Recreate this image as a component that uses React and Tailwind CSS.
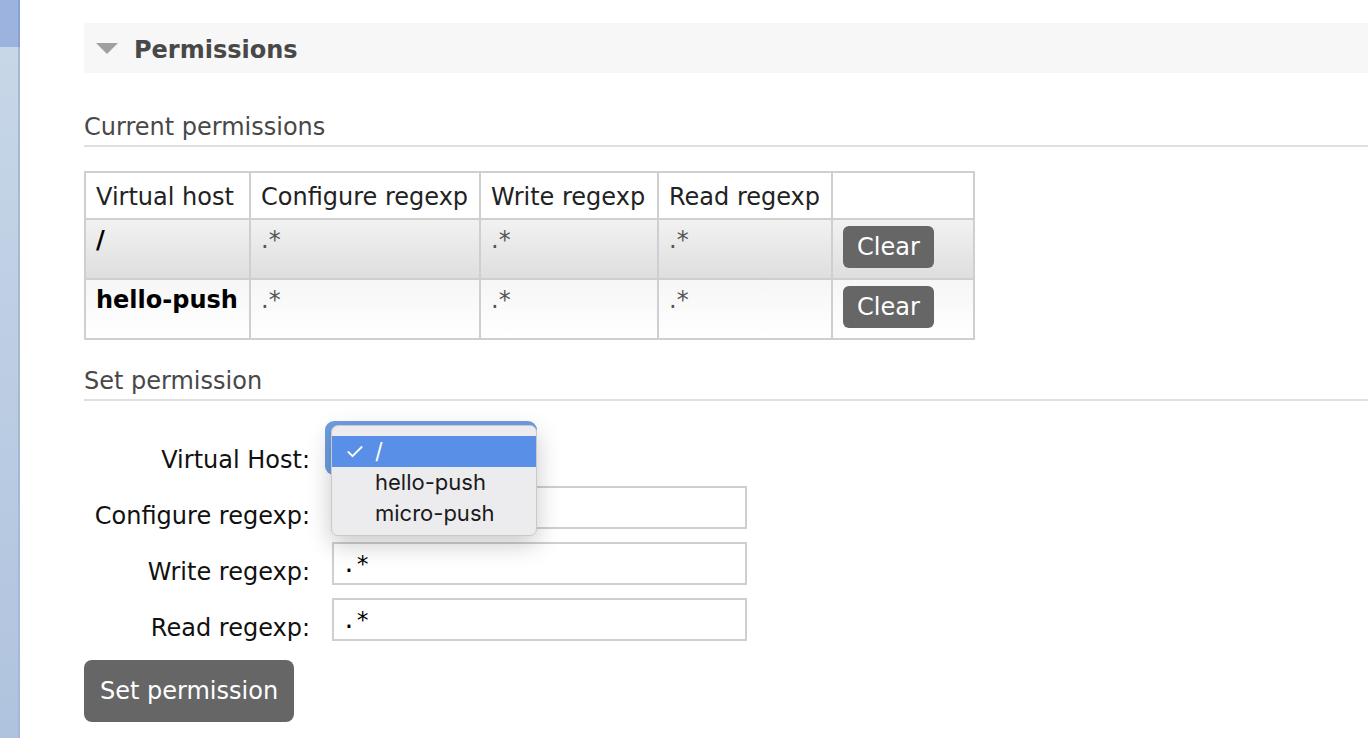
import { Check } from "lucide-react";

const rows = [
  { vhost: "/", configure: ".*", write: ".*", read: ".*", shade: "bg-gradient-to-b from-[#f2f2f2] to-[#dedede]" },
  { vhost: "hello-push", configure: ".*", write: ".*", read: ".*", shade: "bg-gradient-to-b from-[#f6f6f6] to-[#ffffff]" },
];

const fields = [
  { label: "Configure regexp:", value: ".*" },
  { label: "Write regexp:", value: ".*" },
  { label: "Read regexp:", value: ".*" },
];

function Sidebar() {
  return (
    <div className="flex w-[20px] shrink-0 flex-col">
      <div className="h-[47px] border-r-2 border-[#87a2d0] bg-[#9bb3de]" />
      <div className="flex-1 border-r-2 border-[#a6b9d4] bg-gradient-to-b from-[#c7d7e8] to-[#b0c3de]" />
    </div>
  );
}

function SubHeading({ children }) {
  return (
    <h3 className="border-b-2 border-[#e0e0e0] pb-[3px] text-[24px] leading-[29px] font-normal text-[#484848]">
      {children}
    </h3>
  );
}

function PermissionsTable() {
  const cell = "border-2 border-[#cfcfcf] px-[10px] align-top";
  const head = `${cell} pt-[10px] pb-[6px] text-left font-normal`;
  return (
    <table className="mt-[24px] table-fixed border-collapse text-[24px] leading-[29px]">
      <thead>
        <tr className="text-[#222]">
          <th className={`${head} w-[165px]`}>Virtual host</th>
          <th className={`${head} w-[230px]`}>Configure regexp</th>
          <th className={`${head} w-[178px]`}>Write regexp</th>
          <th className={`${head} w-[174px]`}>Read regexp</th>
          <th className={`${head} w-[142px]`}></th>
        </tr>
      </thead>
      <tbody>
        {rows.map((r) => (
          <tr key={r.vhost} className={`h-[60px] ${r.shade}`}>
            <td className={`${cell} pt-[6px] font-bold text-black`}>{r.vhost}</td>
            <td className={`${cell} pt-[6px] text-[#555]`}>{r.configure}</td>
            <td className={`${cell} pt-[6px] text-[#555]`}>{r.write}</td>
            <td className={`${cell} pt-[6px] text-[#555]`}>{r.read}</td>
            <td className={`${cell} pt-[6px]`}>
              <button className="h-[42px] rounded-[6px] bg-[#666] px-[14px] text-[24px] text-white">
                Clear
              </button>
            </td>
          </tr>
        ))}
      </tbody>
    </table>
  );
}

function VhostSelect() {
  return (
    <div className="relative h-[43px] w-[415px]">
      <div className="absolute left-[-7px] top-[-9px] h-[54px] w-[212px] rounded-[9px] bg-[#6d9ee3]" />
      <div
        className="absolute left-[-1px] top-[-5px] z-10 w-[206px] rounded-[7px] border border-[#c9c9cc] bg-[#ececee] pb-[6px] pt-[10px] text-[22px] leading-[31px] text-[#1a1a1a] shadow-[0_8px_24px_rgba(0,0,0,0.22)]"
        style={{ fontFamily: "Inter, 'Liberation Sans', sans-serif" }}
      >
        <div className="flex h-[31px] items-center bg-[#5a8fe8] text-white">
          <span className="flex w-[43px] justify-center pl-[2px]">
            <Check size={20} strokeWidth={2.2} />
          </span>
          <span>/</span>
        </div>
        <div className="flex h-[31px] items-center pl-[43px]">hello-push</div>
        <div className="flex h-[31px] items-center pl-[43px]">micro-push</div>
      </div>
    </div>
  );
}

function FormRow({ label, children }) {
  return (
    <div className="flex items-start gap-[22px]">
      <label className="w-[226px] shrink-0 pt-[18px] text-right text-[24px] leading-[25px] text-[#111]">
        {label}
      </label>
      {children}
    </div>
  );
}

export default function App() {
  return (
    <div
      className="flex h-screen w-full overflow-hidden bg-white"
      style={{ fontFamily: "'DejaVu Sans', Verdana, sans-serif" }}
    >
      <Sidebar />
      <main className="flex-1 pl-[64px] pt-[23px]">
        <div className="flex h-[50px] items-center bg-[#f7f7f7] pl-[12px]">
          <svg width="22" height="11" viewBox="0 0 22 11" className="mr-[16px]">
            <polygon points="0,0 22,0 11,11" fill="#a0a0a0" />
          </svg>
          <h2 className="mt-[4px] text-[24px] font-bold text-[#484848]">Permissions</h2>
        </div>

        <div className="mt-[40px]">
          <SubHeading>Current permissions</SubHeading>
          <PermissionsTable />
        </div>

        <div className="mt-[27px]">
          <SubHeading>Set permission</SubHeading>
          <div className="mt-[29px] flex flex-col gap-[13px]">
            <FormRow label="Virtual Host:">
              <VhostSelect />
            </FormRow>
            {fields.map((f) => (
              <FormRow key={f.label} label={f.label}>
                <input
                  defaultValue={f.value}
                  className="h-[43px] w-[415px] border-2 border-[#cfcfcf] px-[8px] text-[23px] text-black outline-none"
                  style={{ fontFamily: "'DejaVu Sans Mono', monospace" }}
                />
              </FormRow>
            ))}
          </div>
          <button className="mt-[19px] h-[62px] rounded-[8px] bg-[#666] px-[16px] text-[24px] text-white">
            Set permission
          </button>
        </div>
      </main>
    </div>
  );
}
